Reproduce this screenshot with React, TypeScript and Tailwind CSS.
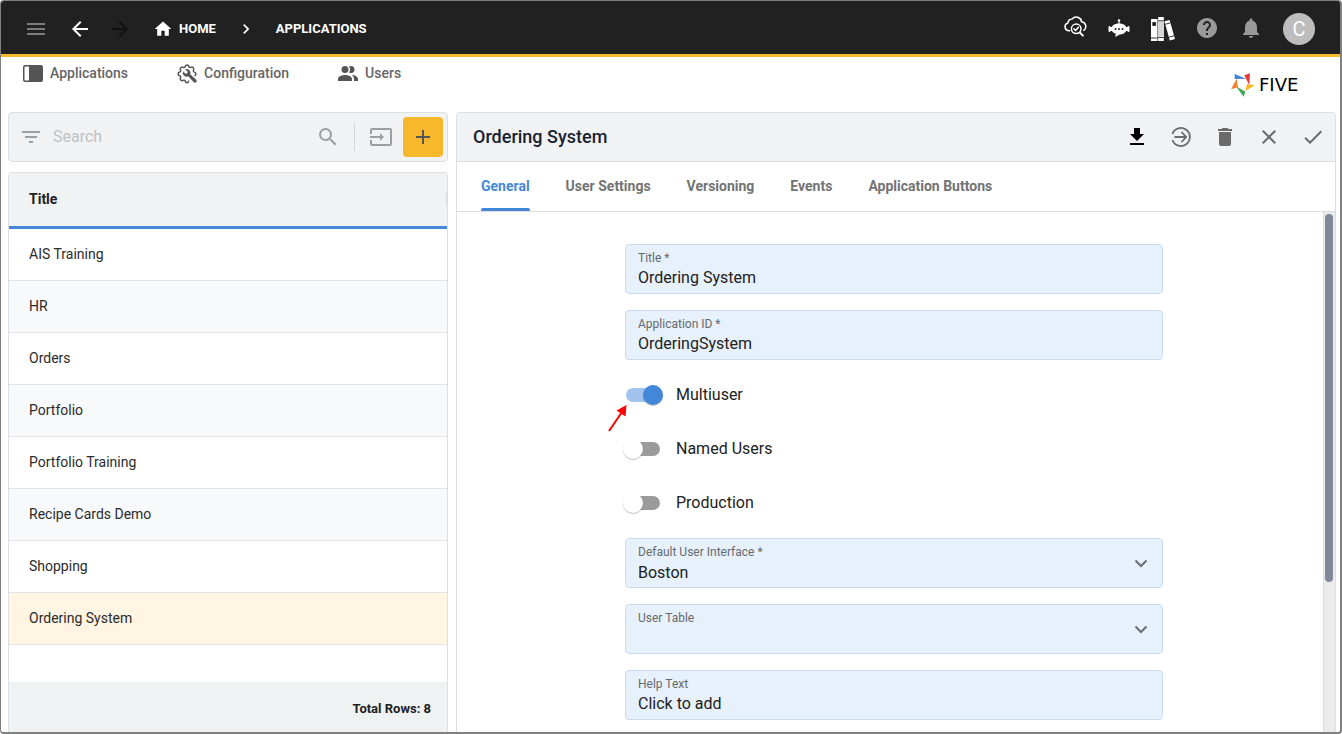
import { useState } from "react";
import type { ReactNode } from "react";
import {
  MdAdd,
  MdArrowBack,
  MdArrowForward,
  MdCheck,
  MdChevronRight,
  MdClose,
  MdDelete,
  MdFilterList,
  MdHelp,
  MdHome,
  MdInput,
  MdMenu,
  MdNotifications,
  MdSearch,
} from "react-icons/md";

const APPS = [
  "AIS Training",
  "HR",
  "Orders",
  "Portfolio",
  "Portfolio Training",
  "Recipe Cards Demo",
  "Shopping",
  "Ordering System",
];

const TABS = ["General", "User Settings", "Versioning", "Events", "Application Buttons"];

const FIELD = "flex h-[50px] flex-col rounded border border-[#cbdcee] bg-[#e7f1fc] px-3 pt-1";
const FIELD_LABEL = "text-xs leading-[18px] text-[#66696d]";
const FIELD_INPUT = "w-full appearance-none bg-transparent text-base leading-[22px] text-[#212121] outline-none";

function CloudSearchIcon() {
  return (
    <svg viewBox="0 0 24 24" className="size-6" fill="none" stroke="currentColor" strokeWidth="1.5" strokeLinecap="round" strokeLinejoin="round">
      <path d="M6.6 14.8H5.6A4 4 0 0 1 4.9 7 4.4 4.4 0 0 1 9 3.1 5.4 5.4 0 0 1 18.600 5.800 4.700 4.700 0 0 1 20.800 14.300" />
      <circle cx="13.200" cy="12.800" r="4.800" />
      <path d="m11 12.900 1.600 1.600 2.800-3.200" />
      <path d="m17 16.600 2.900 3" strokeWidth="2" />
    </svg>
  );
}

function BotIcon() {
  return (
    <svg viewBox="0 0 24 24" className="size-6" fill="currentColor">
      <circle cx="12" cy="4.500" r="1.200" />
      <path d="M11.500 5h1v3h-1z" />
      <path d="M12 7.500c4.600 0 7.500 2.200 7.500 5.500s-2.600 5.200-6.300 5.400c-1.400 0-2.700 2-5.400 2.300.8-.8 1-1.800.9-2.900C6.200 17 4.500 15.500 4.500 13c0-3.300 2.900-5.500 7.500-5.500Z" />
      <rect x="1.500" y="10" width="2" height="6" rx="1" />
      <rect x="20.500" y="10" width="2" height="6" rx="1" />
      <path d="M3 11h18v4H3z" />
      <g fill="#212121">
        <circle cx="8.500" cy="13" r="1" />
        <circle cx="12" cy="13" r="1" />
        <circle cx="15.500" cy="13" r="1" />
      </g>
    </svg>
  );
}

function BooksIcon() {
  return (
    <svg viewBox="0 0 24 24" className="size-6" fill="currentColor">
      <path d="M0 2h6.500v22H0zM7.200 0h5.600v24H7.200z" />
      <path d="M7.200 4.500h5.600v15H7.200z" fill="#d6d6d6" />
      <path d="m13.400 4.300 5.200-1.300 5.400 19-5.200 1.500z" />
      <g fill="none" stroke="#212121" strokeWidth=".9">
        <path d="M0 21h6.500M7.200 3.800h5.600M7.200 20.500h5.600M14.200 7.300l5.200-1.400M18 20.200l5.200-1.500" />
        <path d="M1.800 5.500h2.800v3H1.800z" fill="#212121" />
      </g>
    </svg>
  );
}

function DockLeftIcon() {
  return (
    <svg viewBox="0 0 24 24" className="size-6" fill="currentColor">
      <path d="M20 4H4a2 2 0 0 0-2 2v13a2 2 0 0 0 2 2h16a2 2 0 0 0 2-2V6a2 2 0 0 0-2-2ZM8 19.500H4.500a1 1 0 0 1-1-1v-12a1 1 0 0 1 1-1H8Z" />
    </svg>
  );
}

function GearWrenchIcon() {
  return (
    <svg viewBox="0 0 24 24" className="size-6" fill="none" stroke="currentColor" strokeWidth="1.500" strokeLinejoin="round" strokeLinecap="round">
      <path d="M13.600 20.300c-.3 1-.7 1.400-1.600 1.400-1.200 0-1.600-.6-1.800-1.600-.2-.8-1-1.200-1.900-.8-1 .5-1.800.5-2.500-.2-.8-.8-.8-1.600-.3-2.500.4-.8 0-1.600-.8-1.900-1-.2-1.600-.8-1.600-1.800 0-1.100.7-1.600 1.600-1.800.9-.3 1.200-1.100.8-1.900-.5-1-.4-1.800.3-2.500.8-.7 1.600-.8 2.500-.3.8.4 1.600.1 1.900-.8.3-1 .8-1.600 1.800-1.600s1.600.7 1.800 1.600c.3.9 1.100 1.200 1.900.8 1-.5 1.800-.4 2.500.3s.8 1.600.3 2.500c-.4.800-.1 1.600.8 1.900 1 .3 1.600.8 1.600 1.800 0 .8-.4 1.300-1 1.600" />
      <path
        d="M8 10.200a4 4 0 0 0 5.300 5.100l5.700 6.300c1.300 1 3.600-1.200 2.500-2.500l-6.200-5.800A4 4 0 0 0 10.200 8.200l2.500 2.500-.4 1.600-1.800.4Z"
        fill="currentColor"
        stroke="none"
      />
    </svg>
  );
}

function PeopleIcon() {
  return (
    <svg viewBox="0 0 24 24" className="size-6" fill="currentColor">
      <path d="M16 18v2H2v-2s0-4 7-4 7 4 7 4m-3.500-9.500A3.500 3.500 0 1 0 9 12a3.500 3.500 0 0 0 3.500-3.500m3.440 5.500A5.320 5.320 0 0 1 18 18v2h4v-2s0-3.630-6.060-4M15 5a3.390 3.390 0 0 0-1.930.59 5 5 0 0 1 0 5.820A3.390 3.390 0 0 0 15 12a3.500 3.500 0 0 0 0-7Z" />
    </svg>
  );
}

function DownloadIcon() {
  return (
    <svg viewBox="0 0 24 24" className="size-6" fill="currentColor">
      <path d="M5 20h14v-2H5m14-9h-4V3H9v6H5l7 7 7-7Z" />
    </svg>
  );
}

function EnterCircleIcon() {
  return (
    <svg viewBox="0 0 24 24" className="size-6" fill="none" stroke="currentColor" strokeWidth="1.800">
      <path d="M3.400 9A9 9 0 1 1 3.400 15" />
      <path d="M5.500 12H17M12.500 7 17.200 12l-4.700 5" />
    </svg>
  );
}

function FiveLogo() {
  return (
    <a href="#" aria-label="Five" className="flex w-[89px] items-center gap-1 text-black">
      <svg viewBox="0 0 72 72" className="size-6">
        <path d="M11 3 45 17 11 18Z" fill="#3f82d8" />
        <path d="M40 7 57 1 55 37Z" fill="#e33b3b" />
        <path d="M48 33 72 37 43 54Z" fill="#fbb829" />
        <path d="M15 40 43 56 38 71Z" fill="#3fa757" />
        <path d="M17 17 21 43 0 49Z" fill="#f58233" />
      </svg>
      <span className="font-['DejaVu_Sans'] text-lg leading-6">FIVE</span>
    </a>
  );
}

function IconButton(props: { label: string; className?: string; children: ReactNode }) {
  return (
    <button type="button" aria-label={props.label} className={`flex size-6 shrink-0 items-center justify-center ${props.className ?? ""}`}>
      {props.children}
    </button>
  );
}

function TextField(props: { id: string; label: string; value: string }) {
  return (
    <div className={FIELD}>
      <label htmlFor={props.id} className={FIELD_LABEL}>
        {props.label}
      </label>
      <input id={props.id} type="text" defaultValue={props.value} className={FIELD_INPUT} />
    </div>
  );
}

function SelectField(props: { id: string; label: string; value: string }) {
  return (
    <div className={`${FIELD} relative`}>
      <label htmlFor={props.id} className={FIELD_LABEL}>
        {props.label}
      </label>
      <select id={props.id} defaultValue={props.value} className={`${FIELD_INPUT} pt-px`}>
        <option value={props.value}>{props.value}</option>
      </select>
      <svg viewBox="0 0 24 24" className="pointer-events-none absolute top-3 right-[9px] size-6" fill="none" stroke="#6b6d70" strokeWidth="2">
        <path d="m6.500 9.500 5.500 5.500 5.500-5.500" />
      </svg>
    </div>
  );
}

function SwitchField(props: { label: string; on?: boolean; children?: ReactNode }) {
  return (
    <div className="relative">
      <label className="flex h-[38px] items-center gap-4 pl-px text-base text-[#212121]">
        <input
          type="checkbox"
          role="switch"
          defaultChecked={props.on}
          className="relative h-3.5 w-[34px] shrink-0 appearance-none rounded-full bg-[#9b9b9b] before:absolute before:-top-[3px] before:-left-[3px] before:size-5 before:rounded-full before:bg-white before:shadow-[0_1px_1px_rgba(0,0,0,0.25)] checked:bg-[#a1c3ed] checked:before:left-[17px] checked:before:bg-[#4387d9]"
        />
        {props.label}
      </label>
      {props.children}
    </div>
  );
}

function TopBar() {
  return (
    <header className="flex h-14 shrink-0 items-center justify-between border-b-3 border-[#f8b92b] bg-[#212121] pr-[25px] pl-[23px] text-white">
      <div className="flex items-center pt-0.5">
        <IconButton label="Menu" className="text-[#7c7c7c]">
          <MdMenu className="size-6" />
        </IconButton>
        <IconButton label="Back" className="ml-5">
          <MdArrowBack className="size-6" />
        </IconButton>
        <IconButton label="Forward" className="ml-4 text-[#111111]">
          <MdArrowForward className="size-6" />
        </IconButton>
        <a href="#" className="ml-[21px] flex items-center gap-1.5 text-[13px] font-bold">
          <MdHome className="size-5" />
          HOME
        </a>
        <MdChevronRight className="mx-5 size-5" />
        <a href="#" className="text-[13px] font-bold">
          APPLICATIONS
        </a>
      </div>
      <div className="flex items-center gap-5">
        <IconButton label="Cloud search">
          <CloudSearchIcon />
        </IconButton>
        <IconButton label="Assistant">
          <BotIcon />
        </IconButton>
        <IconButton label="Library" className="pt-0.5">
          <BooksIcon />
        </IconButton>
        <IconButton label="Help" className="text-[#999999]">
          <MdHelp className="size-6" />
        </IconButton>
        <IconButton label="Notifications" className="text-[#999999]">
          <MdNotifications className="size-6" />
        </IconButton>
        <button type="button" className="mt-0.5 size-8 rounded-full bg-[#bdbdbd] text-xl leading-8">
          C
        </button>
      </div>
    </header>
  );
}

function SubNav() {
  const item = "flex h-6 items-center gap-[5px] text-sm font-medium text-[#666666]";
  return (
    <div className="flex h-[55px] shrink-0 items-start justify-between px-5">
      <nav className="flex gap-[47px] pt-1 [&_svg]:text-[#555555]">
        <a href="#" className={item}>
          <DockLeftIcon />
          Applications
        </a>
        <a href="#" className={item}>
          <GearWrenchIcon />
          Configuration
        </a>
        <a href="#" className={item}>
          <PeopleIcon />
          Users
        </a>
      </nav>
      <div className="pt-4">
        <FiveLogo />
      </div>
    </div>
  );
}

function AppList() {
  const [selected, setSelected] = useState("Ordering System");

  return (
    <aside className="flex w-[440px] shrink-0 flex-col gap-2.5">
      <div className="flex h-[50px] shrink-0 items-center rounded border border-[#dddee0] bg-[#f1f2f4] pr-1 pl-2.5 text-[#98a0a6]">
        <IconButton label="Filter">
          <MdFilterList className="size-6" />
        </IconButton>
        <input
          type="text"
          aria-label="Search"
          placeholder="Search"
          className="ml-2.5 min-w-0 flex-1 bg-transparent text-base text-[#212121] outline-none placeholder:text-[#bfc1c4]"
        />
        <IconButton label="Run search">
          <MdSearch className="size-6" />
        </IconButton>
        <div className="mx-3.5 h-7 w-px bg-[#d3d5d7]" />
        <IconButton label="Import">
          <MdInput className="size-6" />
        </IconButton>
        <button type="button" aria-label="Add" className="ml-2.5 flex size-10 items-center justify-center rounded bg-[#f7b92b] text-[#555555]">
          <MdAdd className="size-6" />
        </button>
      </div>

      <div className="flex min-h-0 flex-1 flex-col rounded-t border border-b-0 border-[#dddee0]">
        <table className="w-full border-separate border-spacing-0 text-left text-sm text-[#2b2b2b]">
          <thead>
            <tr>
              <th className="h-14 rounded-t border-b-3 border-[#4387d9] bg-[#f1f2f4] p-0 pb-0.5 pl-5 font-bold text-[#212121]">
                <div className="flex h-3.5 items-center justify-between">
                  Title
                  <span className="h-3.5 w-px bg-[#dddee0]" />
                </div>
              </th>
            </tr>
          </thead>
          <tbody>
            {APPS.map((name) => (
              <tr key={name} onClick={() => setSelected(name)} className={name === selected ? "bg-[#fff5e2]" : "even:bg-[#f8f9fb]"}>
                <td className="h-13 border-b border-[#e1e3e8] p-0 pb-0.5 pl-5">{name}</td>
              </tr>
            ))}
          </tbody>
        </table>
        <div className="mt-auto flex h-[50px] shrink-0 items-center justify-end bg-[#eef2f3] px-4 pt-1 text-[13px] font-bold text-[#212121]">
          Total Rows: {APPS.length}
        </div>
      </div>
    </aside>
  );
}

function Details() {
  const [tab, setTab] = useState("General");

  return (
    <main className="flex min-w-0 flex-1 flex-col rounded-t border border-b-0 border-[#dddee0]">
      <div className="flex h-[49px] shrink-0 items-center justify-between rounded-t border-b border-[#dddee0] bg-[#f1f2f4] pr-2.5 pl-4">
        <h1 className="text-lg font-medium text-[#182230]">Ordering System</h1>
        <div className="flex gap-5 text-[#6b6b6b]">
          <IconButton label="Download" className="text-black">
            <DownloadIcon />
          </IconButton>
          <IconButton label="Open">
            <EnterCircleIcon />
          </IconButton>
          <IconButton label="Delete">
            <MdDelete className="size-6" />
          </IconButton>
          <IconButton label="Close">
            <MdClose className="size-6" />
          </IconButton>
          <IconButton label="Save">
            <MdCheck className="size-6" />
          </IconButton>
        </div>
      </div>

      <div role="tablist" className="flex h-[50px] shrink-0 gap-9 border-b border-[#dddee0] pl-6 text-sm font-bold">
        {TABS.map((name) => (
          <button
            key={name}
            type="button"
            role="tab"
            aria-selected={name === tab}
            onClick={() => setTab(name)}
            className={`relative pb-0.5 ${
              name === tab
                ? "text-[#4387d9] after:absolute after:inset-x-0 after:bottom-0 after:h-[3px] after:rounded-t-xs after:bg-[#4387d9]"
                : "text-[#737373]"
            }`}
          >
            {name}
          </button>
        ))}
      </div>

      <div className="flex min-h-0 flex-1">
        <form className="min-w-0 flex-1 overflow-hidden pt-8 pl-2">
          <div className="mx-auto flex w-full max-w-[538px] flex-col gap-4">
            <TextField id="title" label="Title *" value="Ordering System" />
            <TextField id="app-id" label="Application ID *" value="OrderingSystem" />
            <SwitchField label="Multiuser" on>
              <svg viewBox="0 0 20 28" className="absolute top-7 -left-[17px] h-7 w-5" fill="#fe0000">
                <path d="M1 27 14 8" stroke="#fe0000" strokeWidth="2" />
                <path d="M18.500 1 8.500 6.500 17.500 12.500Z" />
              </svg>
            </SwitchField>
            <SwitchField label="Named Users" />
            <SwitchField label="Production" />
            <SelectField id="default-ui" label="Default User Interface *" value="Boston" />
            <SelectField id="user-table" label="User Table" value="" />
            <TextField id="help-text" label="Help Text" value="Click to add" />
          </div>
        </form>
        <div className="w-3 shrink-0 border-l border-[#dddddd] bg-[#ebebeb] px-px pt-0.5">
          <div className="h-[71%] w-2 rounded-full bg-[#80889a]" />
        </div>
      </div>
    </main>
  );
}

export default function App() {
  return (
    <div className="flex h-screen flex-col overflow-hidden rounded border border-r-2 border-b-2 border-[#808080] bg-white font-[Roboto,sans-serif]">
      <TopBar />
      <SubNav />
      <div className="flex min-h-0 flex-1 gap-2 pr-1 pl-[7px]">
        <AppList />
        <Details />
      </div>
    </div>
  );
}
